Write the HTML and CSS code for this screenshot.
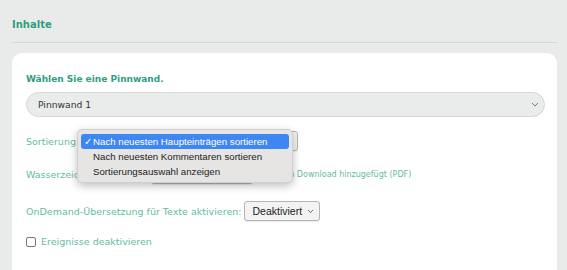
FILE: index.html
```html
<!DOCTYPE html>
<html lang="de">

<head>
	<meta charset="UTF-8">
	<meta name="viewport" content="width=device-width, initial-scale=1.0">
	<title>Inhalte</title>
	<link rel="stylesheet" href="styles.css">
</head>

<body>
	<h1 class="page-title">Inhalte</h1>
	<hr class="divider">

	<section class="card">
		<h2 class="card-heading">Wählen Sie eine Pinnwand.</h2>
		<div class="pill-select">
			<span>Pinnwand 1</span>
			<svg class="chevron" width="8" height="5" viewBox="0 0 8 5"><path d="M1 1l3 3 3-3" fill="none" stroke="#777" stroke-width="1"/></svg>
		</div>

		<div class="field-row sort-row">
			<span class="field-label">Sortierung</span>
			<div class="native-select sort-select"></div>
			<ul class="dropdown-menu">
				<li class="selected"><span class="check">✓</span>Nach neuesten Haupteinträgen sortieren</li>
				<li>Nach neuesten Kommentaren sortieren</li>
				<li>Sortierungsauswahl anzeigen</li>
			</ul>
		</div>

		<div class="field-row watermark-row">
			<span class="field-label">Wasserzeichen anzeigen:</span>
			<div class="native-select watermark-select"></div>
			<span class="field-hint">Wird in Download hinzugefügt (PDF)</span>
		</div>

		<div class="field-row translate-row">
			<span class="field-label">OnDemand-Übersetzung für Texte aktivieren:</span>
			<div class="native-select small-select">
				<span>Deaktiviert</span>
				<svg class="chevron" width="7" height="5" viewBox="0 0 7 5"><path d="M1 1l2.5 2.5L6 1" fill="none" stroke="#666" stroke-width="1"/></svg>
			</div>
		</div>

		<label class="check-row">
			<span class="checkbox"></span>
			<span class="field-label">Ereignisse deaktivieren</span>
		</label>
	</section>
</body>

</html>
```

FILE: styles.css
```css
body {
	margin: 0;
	padding: 0 10px 0 12px;
	background: #e8ebe9;
	font-family: 'DejaVu Sans', sans-serif;
	height: 100vh;
	box-sizing: border-box;
	display: flex;
	flex-direction: column;
	overflow: hidden;
}

.page-title {
	margin: 0;
	padding-top: 18px;
	font-size: 10px;
	line-height: 14px;
	font-weight: bold;
	color: #2f9e84;
}

.divider {
	width: 100%;
	margin: 10px 0 0 0;
	border: none;
	border-top: 1px solid #d4d9d6;
}

.card {
	flex: 1;
	margin-top: 10px;
	background: #fff;
	border-radius: 10px 10px 0 0;
	padding: 19px 12px 0 14px;
}

.card-heading {
	margin: 0;
	font-size: 9px;
	line-height: 14px;
	font-weight: bold;
	color: #2f9e84;
}

.pill-select {
	margin-top: 6px;
	height: 23px;
	border: 1px solid #d3d8d5;
	border-radius: 13px;
	background: #e9ecea;
	display: flex;
	align-items: center;
	justify-content: space-between;
	padding: 0 5px 0 11px;
	font-size: 9.2px;
	color: #333;
}

.field-row {
	display: flex;
	align-items: center;
	position: relative;
	height: 20px;
}

.field-label {
	font-size: 9.5px;
	color: #65bba5;
	white-space: nowrap;
}

.sort-row {
	margin-top: 14px;
}

.watermark-row {
	margin-top: 13px;
}

.translate-row {
	margin-top: 17px;
}

.native-select {
	height: 18px;
	border: 1px solid #b5b5b5;
	border-radius: 3px;
	background: #f3f3f3;
	box-shadow: 0 1px 1px rgba(0, 0, 0, 0.08);
	display: flex;
	align-items: center;
	justify-content: space-between;
	font-family: 'Liberation Sans', sans-serif;
	font-size: 10.5px;
	color: #222;
}

.sort-select {
	margin-left: 2px;
	width: 218px;
}

.watermark-select {
	margin-left: 5px;
	width: 100px;
}

.field-hint {
	margin-left: 13px;
	font-size: 8px;
	color: #65bba5;
	white-space: nowrap;
}

.small-select {
	margin-left: 3px;
	width: 62px;
	padding: 0 5px 0 7px;
}

.dropdown-menu {
	position: absolute;
	left: 51px;
	top: -2px;
	width: 208px;
	margin: 0;
	padding: 4px 3px 3px 3px;
	list-style: none;
	background: #e6e5e4;
	border: 1px solid #cfcfcf;
	border-radius: 5px;
	box-shadow: 0 3px 8px rgba(0, 0, 0, 0.25);
	font-family: 'Liberation Sans', sans-serif;
	font-size: 9.7px;
	color: #222;
	z-index: 2;
}

.dropdown-menu li {
	height: 15px;
	line-height: 15px;
	padding-left: 12px;
	position: relative;
	border-radius: 3px;
}

.dropdown-menu li.selected {
	background: #3f86f5;
	color: #fff;
}

.check {
	position: absolute;
	left: 3px;
}

.check-row {
	display: flex;
	align-items: center;
	margin-top: 15px;
	gap: 5px;
}

.checkbox {
	width: 8px;
	height: 8px;
	border: 1px solid #777;
	border-radius: 2px;
	background: #fff;
}
```
